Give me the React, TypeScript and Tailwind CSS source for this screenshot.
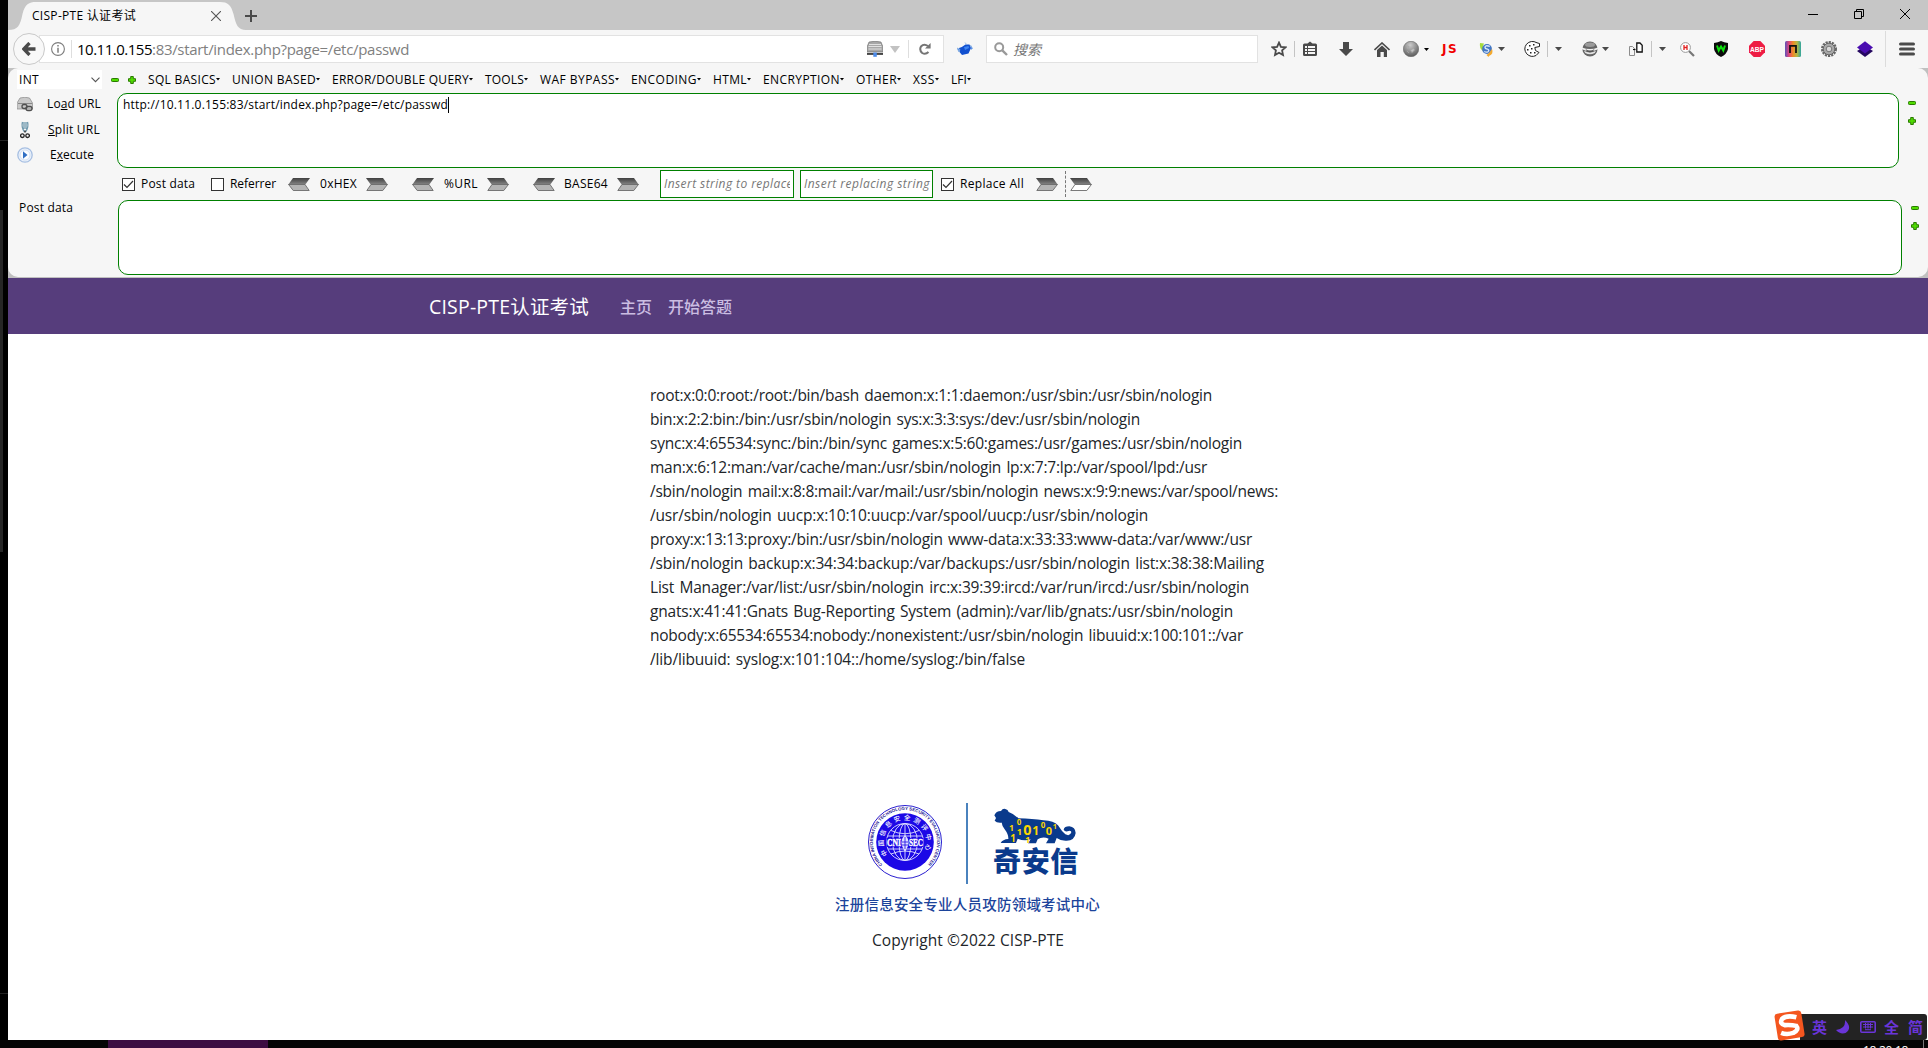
import { useLayoutEffect, useRef, useState } from "react";
import type { ReactNode } from "react";

/** Single line of text whose tracking is adjusted so that it fills its box. */
function Fit({ className = "", children }: { className?: string; children: ReactNode }) {
  const box = useRef<HTMLSpanElement>(null);
  const inner = useRef<HTMLSpanElement>(null);
  const [tracking, setTracking] = useState(0);
  useLayoutEffect(() => {
    if (!box.current || !inner.current) return;
    const count = (inner.current.textContent ?? "").length;
    const natural = inner.current.getBoundingClientRect().width - tracking * count;
    setTracking((box.current.getBoundingClientRect().width - natural) / count);
  }, []);
  return (
    <span ref={box} className={`inline-block shrink-0 whitespace-nowrap ${className}`}>
      <span ref={inner} style={{ letterSpacing: `${tracking}px` }}>
        {children}
      </span>
    </span>
  );
}

function Caret({ className = "" }: { className?: string }) {
  return (
    <svg className={`shrink-0 ${className}`} width="7" height="4" viewBox="0 0 7 4">
      <path d="M0 0h7L3.5 4z" fill="#4a4a4a" />
    </svg>
  );
}

function SmallCaret({ className = "" }: { className?: string }) {
  return (
    <svg className={`shrink-0 ${className}`} width="5" height="3" viewBox="0 0 5 3">
      <path d="M0 0h5L2.5 3z" fill="#000" />
    </svg>
  );
}

function Minus({ className = "" }: { className?: string }) {
  return (
    <svg className={`shrink-0 ${className}`} width="8" height="4" viewBox="0 0 8 4">
      <rect x=".5" y=".5" width="7" height="3" rx=".8" fill="#4fdc00" stroke="#2a7a00" />
    </svg>
  );
}

function Plus({ className = "" }: { className?: string }) {
  return (
    <svg className={`shrink-0 ${className}`} width="8" height="8" viewBox="0 0 8 8">
      <path d="M2.7.5h2.6v2.2h2.2v2.6H5.3v2.2H2.7V5.3H.5V2.7h2.2z" fill="#4fdc00" stroke="#2a7a00" strokeLinejoin="round" />
    </svg>
  );
}

function Arrow({ dir = "right", hollow = false, className = "" }: { dir?: "left" | "right"; hollow?: boolean; className?: string }) {
  return (
    <svg className={`shrink-0 ${className}`} width="22" height="13" viewBox="0 0 22 13">
      <defs>
        <linearGradient id="arrowTop" x1="0" x2="0" y1="0" y2="1">
          <stop offset="0" stopColor="#3f3f3f" />
          <stop offset="1" stopColor="#8a8a8a" />
        </linearGradient>
      </defs>
      <g transform={dir === "left" ? "translate(22 0) scale(-1 1)" : undefined}>
        <path d="M0 0h17L22 7H5z" fill="url(#arrowTop)" />
        <path d="M5 6.500h16.400L16.800 12.500H.8z" fill={hollow ? "#fff" : "#b4b4b4"} stroke="#6b6b6b" strokeWidth=".9" />
      </g>
    </svg>
  );
}

function Checkbox({ checked = false, className = "" }: { checked?: boolean; className?: string }) {
  return (
    <span className={`flex size-[13px] shrink-0 items-center justify-center border border-[#333] bg-white ${className}`}>
      {checked && (
        <svg width="11" height="11" viewBox="0 0 11 11">
          <path d="M1 5.500L4 8.500L10 2" fill="none" stroke="#333" strokeWidth="1.200" />
        </svg>
      )}
    </span>
  );
}

function TabStrip() {
  return (
    <div className="flex h-[30px] shrink-0 bg-[#c6c6c6]">
      <div className="relative flex h-full w-[226px] shrink-0 items-center">
        <svg className="absolute left-0 top-0" width="238" height="30" viewBox="0 0 238 30">
          <path d="M0 30C10 30 12 26 14.500 14C17 4 21 2 28 2H212C220 2 223 5 225.500 14C228 25 230 30 238 30Z" fill="#f6f6f6" />
        </svg>
        <Fit className="relative ml-6 mt-0.5 w-[104px] text-[12px] leading-4 text-black">CISP-PTE 认证考试</Fit>
        <svg className="relative ml-[75px] mt-0.5" width="10" height="10" viewBox="0 0 10 10">
          <path d="M0 0L10 10M10 0L0 10" stroke="#555" strokeWidth="1.100" />
        </svg>
      </div>
      <svg className="ml-[11px] mt-[10px]" width="12" height="12" viewBox="0 0 12 12">
        <path d="M6 0V12M0 6H12" stroke="#4a4a4a" strokeWidth="2" />
      </svg>
      <div className="ml-auto flex items-center pr-[18px]">
        <svg className="mb-[3px]" width="10" height="10" viewBox="0 0 10 10">
          <path d="M0 5.500H10" stroke="#000" />
        </svg>
        <svg className="mb-[2px] ml-9" width="10" height="10" viewBox="0 0 10 10">
          <path d="M.5 2.500h7v7h-7zM2.500 2.500V.5h7v7h-2" fill="none" stroke="#000" />
        </svg>
        <svg className="mb-[2px] ml-9" width="10" height="10" viewBox="0 0 10 10">
          <path d="M0 0L10 10M10 0L0 10" stroke="#000" />
        </svg>
      </div>
    </div>
  );
}

function Divider({ className = "" }: { className?: string }) {
  return <span className={`h-4 w-px shrink-0 bg-[#c4c4c4] ${className}`} />;
}

function ToolbarIcons() {
  return (
    <div className="flex flex-1 items-center">
      <svg className="ml-[13px] shrink-0" width="16" height="16" viewBox="0 0 16 16">
        <path d="M8 1.600l1.900 4.200 4.600.5-3.400 3.100.9 4.700L8 11.800l-4 2.300.9-4.700L1.500 6.300l4.600-.5z" fill="none" stroke="#4a4a4a" strokeWidth="1.800" />
      </svg>
      <Divider className="ml-[7px]" />
      <svg className="ml-2 shrink-0" width="14" height="16" viewBox="0 0 14 16">
        <path d="M1.500 2.500H4.500L7 .5L9.500 2.500H12.500Q14 2.500 14 4V13.500Q14 15 12.500 15H1.500Q0 15 0 13.500V4Q0 2.500 1.500 2.500Z" fill="#4a4a4a" />
        <path d="M2 5h2v2H2zM5 5h7v2H5zM2 8h2v2H2zM5 8h7v2H5zM2 11h2v2H2zM5 11h7v2H5z" fill="#f6f6f6" />
      </svg>
      <svg className="ml-[22px] shrink-0" width="14" height="14" viewBox="0 0 14 14">
        <path d="M4 0h6v7h4L7 14L0 7h4z" fill="#4a4a4a" />
      </svg>
      <svg className="ml-[21px] shrink-0" width="16" height="15" viewBox="0 0 16 15">
        <path d="M.5 8L8 1L15.500 8" fill="none" stroke="#4a4a4a" strokeWidth="1.600" />
        <path d="M3 8L8 3.500L13 8V15H9.800V10H6.500V15H3Z" fill="#4a4a4a" />
      </svg>
      <svg className="ml-[13px] shrink-0" width="16" height="16" viewBox="0 0 16 16">
        <defs>
          <radialGradient id="moonBall" cx=".45" cy=".25" r=".8">
            <stop offset="0" stopColor="#ccc" />
            <stop offset="1" stopColor="#555" />
          </radialGradient>
        </defs>
        <circle cx="8" cy="8" r="7.700" fill="url(#moonBall)" stroke="#666" strokeWidth=".6" />
        <path d="M4 5l2 .5-1.500 2zM7.500 9l3-1.500 1 1.500-2.500 2.500zM4 10l2 2" fill="#c4c4c4" stroke="#a5a5a5" strokeWidth=".8" />
      </svg>
      <SmallCaret className="ml-[5px]" />
      <Fit className="ml-[13px] w-4 font-['DejaVu_Sans'] text-[12px] font-bold leading-4 text-[#f00000]">JS</Fit>
      <svg className="ml-[21px] shrink-0" width="15" height="15" viewBox="0 0 15 15">
        <path d="M1 1l4 .5L4 4l2 2-2 3Q0 6 1 1Z" fill="#a6dc3c" />
        <circle cx="8" cy="7" r="4.900" fill="#4377c4" />
        <path d="M10.800 4.300Q6 2.800 6 5.300Q6 7 8.500 7.200Q10.800 8 9 9.700Q7.500 10.800 5.300 9.500" fill="none" stroke="#dce9fb" strokeWidth="1.300" />
        <path d="M13 7Q15 12 10 14L9.500 15L7.500 13L10 11Z" fill="#f3a92f" />
      </svg>
      <Caret className="ml-1" />
      <svg className="ml-[19px] shrink-0" width="17" height="16" viewBox="0 0 17 16">
        <path d="M13 1.800Q7-1.500 2.500 3.200Q-1 8 2.700 12.800Q7 17 12 14.500L15 11.500L11.500 9.500L10.800 6.500L15.500 5.500V2.500Z" fill="#fff" stroke="#222" strokeWidth="1" />
        <path d="M5 4h1.500v1.500H5zM9 3h1.500v1.500H9zM3 8h1.500v1.500H3zM7 7h1.500v1.500H7zM6 11h1.500v1.500H6zM10 11h1.500v1.500H10z" fill="#222" />
      </svg>
      <Divider className="ml-[6px]" />
      <Caret className="ml-[7px]" />
      <svg className="ml-5 shrink-0" width="16" height="16" viewBox="0 0 16 16">
        <circle cx="8" cy="8" r="7.600" fill="#666" />
        <path d="M0 6.500Q8 9.500 16 6.500V8.300Q8 12 0 8.300Z" fill="#f1f1f1" />
        <path d="M2 9.800Q8 13 14 9.800L12.800 12Q8 14.500 3.200 12Z" fill="#e2e2e2" />
        <path d="M3.500 8Q8 11 12.500 8L11 10.500Q8 12 5 10.500Z" fill="#555" />
        <ellipse cx="8" cy="3.800" rx="5" ry="2.200" fill="#9b9b9b" />
      </svg>
      <Caret className="ml-1" />
      <svg className="ml-5 shrink-0" width="14" height="14" viewBox="0 0 14 14">
        <path d="M.5 4.500h3l2 2v7h-5z" fill="#f6f6f6" stroke="#8c8c8c" />
        <path d="M7.800 1h3.200l2.200 2.200V10H7.800z" fill="#fff" stroke="#111" strokeWidth="1.300" />
        <path d="M4 7.500h2.500" stroke="#111" strokeWidth="1.200" />
      </svg>
      <Divider className="ml-2" />
      <Caret className="ml-[7px]" />
      <svg className="ml-[14px] shrink-0" width="15" height="15" viewBox="0 0 15 15">
        <path d="M9 9L14 14" stroke="#777" strokeWidth="2.200" />
        <circle cx="5.500" cy="5.500" r="4.900" fill="#fff" stroke="#999" />
        <path d="M4 3v5M7 3v5M4 5.500h3" stroke="#e02020" strokeWidth="1.300" />
      </svg>
      <svg className="ml-[19px] shrink-0" width="14" height="16" viewBox="0 0 14 16">
        <path d="M7 0Q10 1.500 14 2V8Q13 13 7 16Q1 13 0 8V2Q4 1.500 7 0Z" fill="#0b0b0b" />
        <path d="M3 4.500L4.700 9.500L7 5.500L9.300 9.500L11 4.500" fill="none" stroke="#0ee00e" strokeWidth="2" />
      </svg>
      <svg className="ml-[21px] shrink-0" width="16" height="16" viewBox="0 0 16 16">
        <path d="M4.700 0h6.600L16 4.700v6.600L11.300 16H4.700L0 11.300V4.700z" fill="#ee1c44" />
        <text x="8" y="11.200" textAnchor="middle" fontSize="8" fontWeight="700" textLength="14" lengthAdjust="spacingAndGlyphs" fill="#fff" fontFamily="Liberation Sans">
          ABP
        </text>
      </svg>
      <svg className="ml-5 shrink-0" width="16" height="16" viewBox="0 0 16 16">
        <defs>
          <linearGradient id="rainbow">
            <stop offset="0" stopColor="#5d52b8" />
            <stop offset=".25" stopColor="#e0457a" />
            <stop offset=".5" stopColor="#ef8a25" />
            <stop offset=".75" stopColor="#b5b944" />
            <stop offset="1" stopColor="#2ea5a0" />
          </linearGradient>
        </defs>
        <rect width="16" height="16" rx="1.500" fill="url(#rainbow)" />
        <path d="M5 12V4.800h6V12" fill="none" stroke="#111" strokeWidth="1.800" />
      </svg>
      <svg className="ml-5 shrink-0" width="16" height="16" viewBox="0 0 16 16">
        <circle cx="8" cy="8" r="6.900" fill="none" stroke="#666" strokeWidth="2.200" strokeDasharray="2.200 1" />
        <circle cx="8" cy="8" r="5.800" fill="#a9a9a9" stroke="#666" />
        <circle cx="8" cy="8" r="2.800" fill="#d9d9d9" stroke="#777" />
      </svg>
      <svg className="ml-5 shrink-0" width="16" height="16" viewBox="0 0 16 16">
        <path d="M0 10L8 5L16 10L8 16Z" fill="#24075f" />
        <path d="M0 6.500L8 .3L16 6.500L8 12.500Z" fill="#4a0db0" />
      </svg>
      <span className="ml-3 h-9 w-px shrink-0 bg-[#dcdcdc]" />
      <svg className="ml-[13px] shrink-0" width="16" height="14" viewBox="0 0 16 14">
        <path d="M1.500 2h13M1.500 7h13M1.500 12h13" stroke="#4a4a4a" strokeWidth="3" strokeLinecap="round" />
      </svg>
    </div>
  );
}

function NavBar() {
  return (
    <div className="flex h-[38px] shrink-0 items-center bg-[#f6f6f6]">
      <div className="relative z-10 ml-[5px] flex size-8 shrink-0 items-center justify-center rounded-full border border-[#c9c9c9] bg-[#f8f8f8]">
        <svg width="14" height="14" viewBox="0 0 14 14">
          <path d="M7.500 1L1.800 7L7.500 13M2.500 7H13.500" fill="none" stroke="#4a4a4a" strokeWidth="3.300" />
        </svg>
      </div>
      <div className="-ml-[6px] flex h-7 w-[905px] shrink-0 items-center border border-[#e2e2e2] bg-white">
        <svg className="ml-[11px] shrink-0" width="14" height="14" viewBox="0 0 14 14">
          <circle cx="7" cy="7" r="6.400" fill="none" stroke="#7d7d7d" strokeWidth="1.100" />
          <path d="M7 3v1.600M7 5.800v5" stroke="#7d7d7d" strokeWidth="1.500" />
        </svg>
        <span className="ml-[6px] h-[18px] w-px shrink-0 bg-[#dedede]" />
        <Fit className="ml-[5px] w-[75px] text-[15px] leading-5 text-black">10.11.0.155</Fit>
        <Fit className="w-[257px] text-[15px] leading-5 text-[#808080]">:83/start/index.php?page=/etc/passwd</Fit>
        <svg className="ml-auto shrink-0" width="16" height="16" viewBox="0 0 16 16">
          <path d="M2 1Q8-.5 14 1L16 6V10.500H0V6Z" fill="#a8a8a8" stroke="#666" strokeWidth=".6" />
          <path d="M2 3.500h12M1.500 5.500h13M1.500 8h13" stroke="#e8e8e8" strokeWidth=".9" />
          <path d="M0 12.800h16" stroke="#444" strokeWidth="2.200" />
          <path d="M6.300 11.500h3.500v4.300H6.300z" fill="#4d8be8" />
        </svg>
        <svg className="ml-[7px] shrink-0" width="10" height="7" viewBox="0 0 10 7">
          <path d="M0 0h10L5 7z" fill="#c2c2c2" />
        </svg>
        <span className="ml-2 h-[18px] w-px shrink-0 bg-[#dedede]" />
        <svg className="ml-[10px] mr-[12px] shrink-0" width="12" height="12" viewBox="0 0 12 12">
          <path d="M9.500 9Q6.500 12 3.200 10Q0 7 2 3.500Q5 .2 9 3" fill="none" stroke="#757575" strokeWidth="2" />
          <path d="M11.600 0V5.500H6Z" fill="#757575" />
        </svg>
      </div>
      <svg className="ml-[13px] shrink-0" width="16" height="14" viewBox="0 0 16 14">
        <path d="M2 6Q5.500 5 8.500 2.500L12.500 2.500L14 6L11.500 11.500L5 13L2.500 10Z" fill="#1150cf" />
        <path d="M0 6l3 1.500L2 10zM8 .5l2 2.500M13.500 3l2 3.500-1.500 1" fill="#4786ea" stroke="#86aee0" strokeWidth=".8" />
        <path d="M7 5l4.500-1 .5 2-4 2z" fill="#3e84f2" />
      </svg>
      <div className="ml-[13px] flex h-7 w-[272px] shrink-0 items-center border border-[#e2e2e2] bg-white">
        <svg className="ml-[7px] shrink-0" width="14" height="14" viewBox="0 0 14 14">
          <circle cx="5.200" cy="5.200" r="4" fill="none" stroke="#999" strokeWidth="2" />
          <path d="M8.300 8.300L13 13" stroke="#999" strokeWidth="2.400" />
        </svg>
        <Fit className="ml-[5px] mt-px w-7 text-[14px] italic leading-5 text-[#777]">搜索</Fit>
      </div>
      <ToolbarIcons />
    </div>
  );
}

const menus: { label: string; cls: string }[] = [
  { label: "SQL BASICS", cls: "w-[68px]" },
  { label: "UNION BASED", cls: "w-[84px]" },
  { label: "ERROR/DOUBLE QUERY", cls: "w-[137px]" },
  { label: "TOOLS", cls: "w-[39px]" },
  { label: "WAF BYPASS", cls: "w-[75px]" },
  { label: "ENCODING", cls: "w-[66px]" },
  { label: "HTML", cls: "w-[34px]" },
  { label: "ENCRYPTION", cls: "w-[77px]" },
  { label: "OTHER", cls: "w-[41px]" },
  { label: "XSS", cls: "w-[22px]" },
  { label: "LFI", cls: "w-[16px]" },
];

function MenuRow() {
  return (
    <div className="flex h-[25px] shrink-0 items-center pb-[2px] pl-[9px]">
      <div className="flex h-[19px] w-[85px] shrink-0 items-center bg-white">
        <Fit className="ml-0.5 w-5">INT</Fit>
        <svg className="ml-auto mr-[2px]" width="9" height="6" viewBox="0 0 9 6">
          <path d="M.5.700L4.500 4.700L8.500.700" fill="none" stroke="#555" strokeWidth="1.100" />
        </svg>
      </div>
      <Minus className="ml-[9px]" />
      <Plus className="ml-[9px]" />
      <div className="ml-3 flex items-center gap-3">
        {menus.map((m) => (
          <div key={m.label} className="flex items-center">
            <Fit className={m.cls}>{m.label}</Fit>
            <svg className="shrink-0" width="4" height="3" viewBox="0 0 4 3">
              <path d="M0 0h4L2 2.500z" fill="#000" />
            </svg>
          </div>
        ))}
      </div>
    </div>
  );
}

function ConvertRow() {
  return (
    <div className="flex h-8 shrink-0 items-center pl-[114px]">
      <Checkbox checked />
      <Fit className="ml-[6px] w-[54px]">Post data</Fit>
      <Checkbox className="ml-4" />
      <Fit className="ml-[6px] w-[46px]">Referrer</Fit>
      <Arrow dir="left" className="ml-3" />
      <Fit className="ml-[10px] w-[37px]">0xHEX</Fit>
      <Arrow className="ml-[9px]" />
      <Arrow dir="left" className="ml-6" />
      <Fit className="ml-[10px] w-[34px]">%URL</Fit>
      <Arrow className="ml-[9px]" />
      <Arrow dir="left" className="ml-6" />
      <Fit className="ml-[9px] w-[44px]">BASE64</Fit>
      <Arrow className="ml-[9px]" />
      <div className="ml-[21px] flex h-7 w-[134px] shrink-0 items-center overflow-hidden border border-[#008000] bg-white px-[3px]">
        <span className="w-full overflow-hidden whitespace-nowrap">
          <Fit className="w-[129px] italic text-[#777]">Insert string to replace</Fit>
        </span>
      </div>
      <div className="ml-[6px] flex h-7 w-[133px] shrink-0 items-center overflow-hidden border border-[#008000] bg-white px-[3px]">
        <Fit className="w-[126px] italic text-[#777]">Insert replacing string</Fit>
      </div>
      <Checkbox checked className="ml-2" />
      <Fit className="ml-[6px] w-[64px]">Replace All</Fit>
      <Arrow className="ml-3" />
      <span className="ml-[7px] h-[26px] shrink-0 border-l border-dashed border-[#777]" />
      <Arrow hollow className="ml-1" />
    </div>
  );
}

function HackBar() {
  return (
    <div className="h-[210px] shrink-0 bg-[#c0c0c0]">
      <div className="flex h-[209px] flex-col rounded-[10px] bg-[#f6f6f6] text-[12px] leading-4 text-black">
        <MenuRow />
        <div className="flex h-[75px] shrink-0">
          <div className="-mt-px flex w-[109px] shrink-0 flex-col pl-[9px]">
            <div className="flex h-[25px] items-center">
              <svg className="shrink-0" width="16" height="15" viewBox="0 0 16 15">
                <path d="M3 1Q8-.5 12.500 1L15.500 6V12H0V6Z" fill="#c9c9c9" stroke="#888" strokeWidth=".7" />
                <path d="M1 6.500H15" stroke="#888" />
                <rect x="5" y="7.500" width="5" height="4" rx="2" fill="none" stroke="#4e4e4e" strokeWidth="1.300" />
                <rect x="9" y="9.500" width="6" height="4" rx="2" fill="none" stroke="#4e4e4e" strokeWidth="1.300" />
              </svg>
              <Fit className="ml-[14px] w-[54px] -translate-y-px">
                Lo<u>a</u>d URL
              </Fit>
            </div>
            <div className="flex h-[26px] items-center">
              <svg className="ml-[3px] shrink-0" width="10" height="18" viewBox="0 0 10 18">
                <path d="M2.500 1Q1 6 4.500 11M7.500 1Q9 6 5.500 11M4 1v7M6 1v7" fill="none" stroke="#6d98ad" strokeWidth="1.300" />
                <path d="M5 9.500v2" stroke="#333" strokeWidth="1.500" />
                <circle cx="2.400" cy="14.700" r="1.800" fill="none" stroke="#222" strokeWidth="1.300" />
                <circle cx="7.600" cy="14.700" r="1.800" fill="none" stroke="#222" strokeWidth="1.300" />
              </svg>
              <Fit className="ml-[18px] w-[52px]">
                <u>S</u>plit URL
              </Fit>
            </div>
            <div className="flex h-[24px] items-center">
              <svg className="shrink-0" width="16" height="16" viewBox="0 0 16 16">
                <circle cx="8" cy="8" r="7.200" fill="#eaf1fb" stroke="#a7bfe2" strokeWidth="1.300" />
                <circle cx="8" cy="8" r="5" fill="#fbfdff" stroke="#d3e0f2" />
                <path d="M6 4.300L10.500 8L6 11.700Z" fill="#2f6fc4" />
              </svg>
              <Fit className="ml-[17px] w-[44px]">
                E<u>x</u>ecute
              </Fit>
            </div>
          </div>
          <div className="flex w-[1782px] shrink-0 items-start rounded-[10px] border border-[#008000] bg-white pl-[5px] pt-[3px]">
            <Fit className="w-[325px]">http://10.11.0.155:83/start/index.php?page=/etc/passwd</Fit>
            <span className="h-4 w-px bg-black" />
          </div>
          <div className="ml-[9px] flex flex-col pt-2">
            <Minus />
            <Plus className="mt-3" />
          </div>
        </div>
        <ConvertRow />
        <div className="flex h-[75px] shrink-0">
          <div className="w-[110px] shrink-0 pl-[11px]">
            <Fit className="w-[54px]">Post data</Fit>
          </div>
          <div className="w-[1784px] shrink-0 rounded-[10px] border border-[#008000] bg-white" />
          <div className="ml-[9px] flex flex-col pt-[6px]">
            <Minus />
            <Plus className="mt-3" />
          </div>
        </div>
      </div>
    </div>
  );
}

const passwd: { text: string; cls: string }[] = [
  { text: "root:x:0:0:root:/root:/bin/bash daemon:x:1:1:daemon:/usr/sbin:/usr/sbin/nologin", cls: "w-[562px]" },
  { text: "bin:x:2:2:bin:/bin:/usr/sbin/nologin sys:x:3:3:sys:/dev:/usr/sbin/nologin", cls: "w-[490px]" },
  { text: "sync:x:4:65534:sync:/bin:/bin/sync games:x:5:60:games:/usr/games:/usr/sbin/nologin", cls: "w-[592px]" },
  { text: "man:x:6:12:man:/var/cache/man:/usr/sbin/nologin lp:x:7:7:lp:/var/spool/lpd:/usr", cls: "w-[557px]" },
  { text: "/sbin/nologin mail:x:8:8:mail:/var/mail:/usr/sbin/nologin news:x:9:9:news:/var/spool/news:", cls: "w-[628px]" },
  { text: "/usr/sbin/nologin uucp:x:10:10:uucp:/var/spool/uucp:/usr/sbin/nologin", cls: "w-[498px]" },
  { text: "proxy:x:13:13:proxy:/bin:/usr/sbin/nologin www-data:x:33:33:www-data:/var/www:/usr", cls: "w-[602px]" },
  { text: "/sbin/nologin backup:x:34:34:backup:/var/backups:/usr/sbin/nologin list:x:38:38:Mailing", cls: "w-[614px]" },
  { text: "List Manager:/var/list:/usr/sbin/nologin irc:x:39:39:ircd:/var/run/ircd:/usr/sbin/nologin", cls: "w-[599px]" },
  { text: "gnats:x:41:41:Gnats Bug-Reporting System (admin):/var/lib/gnats:/usr/sbin/nologin", cls: "w-[583px]" },
  { text: "nobody:x:65534:65534:nobody:/nonexistent:/usr/sbin/nologin libuuid:x:100:101::/var", cls: "w-[593px]" },
  { text: "/lib/libuuid: syslog:x:101:104::/home/syslog:/bin/false", cls: "w-[375px]" },
];

function Seal() {
  return (
    <svg width="76" height="76" viewBox="-38 -38 76 76">
      <defs>
        <path id="sealOuter" d="M-22.600 22.600A32 32 0 1 1 22.600 22.600" />
        <path id="sealInner" d="M-17 12.500A21.500 21.500 0 1 1 17 12.500" />
      </defs>
      <circle r="36.500" fill="#fff" stroke="#2a1fd0" strokeWidth="1" />
      <circle r="28.800" fill="#1c08e6" />
      <text fontSize="4.400" fontWeight="700" fill="#1c1390" fontFamily="Liberation Sans">
        <textPath href="#sealOuter" textLength="150" lengthAdjust="spacingAndGlyphs">CHINA INFORMATION TECHNOLOGY SECURITY EVALUATION CENTER</textPath>
      </text>
      <text fontSize="6.500" fontWeight="500" fill="#fff" fontFamily="Noto Sans CJK SC">
        <textPath href="#sealInner" textLength="90">中国信息安全测评中心</textPath>
      </text>
      <g fill="none" stroke="#dfe0ff" strokeWidth=".9">
        <circle r="18.500" />
        <ellipse rx="6" ry="18.500" />
        <ellipse rx="12.500" ry="18.500" />
        <path d="M-14-11.500Q0-5 14-11.500M-17-6H17M-17 7H17M-14 12Q0 6 14 12M0-18.500V18.500" />
      </g>
      <rect x="-18.500" y="-4" width="37" height="9" fill="#1c08e6" />
      <text x="-18" y="4.400" fontSize="9.500" fontWeight="700" textLength="14" lengthAdjust="spacingAndGlyphs" fill="#fff" stroke="#fff" strokeWidth=".4" fontFamily="Liberation Serif">CNI</text>
      <text x="4" y="4.400" fontSize="9.500" fontWeight="700" textLength="14" lengthAdjust="spacingAndGlyphs" fill="#fff" stroke="#fff" strokeWidth=".4" fontFamily="Liberation Serif">SEC</text>
      <path d="M0-7Q5-2 3 4L0 10L-3 4Q-5-2 0-7Z" fill="#dfe0ff" />
      <path d="M-3 0H3M-3 3H3M0-5V7" stroke="#1c08e6" strokeWidth=".8" />
    </svg>
  );
}

function Tiger() {
  return (
    <svg width="84" height="36" viewBox="521 58 252 108">
      <path
        d="M525 80Q530 67 545 67Q550 59 558 61Q566 63 568 70Q585 76 597 89Q640 90 672 95Q704 97 716 110Q727 128 738 137Q752 144 756 131Q756 125 748 127Q737 131 733 123Q735 113 750 113Q768 115 769 133Q766 156 742 156Q724 157 712 148L706 164H680L688 150Q670 142 655 152L650 164H626L634 152Q615 158 595 150L590 163H544Q550 152 567 151Q568 138 556 122Q546 108 548 102Q532 104 526 96L530 88Z"
        fill="#0a3a8c"
      />
      <g fill="#fbd500" fontFamily="Noto Sans" fontWeight="700">
        <text x="569" y="128" fontSize="26">1</text>
        <text x="592" y="110" fontSize="24">0</text>
        <text x="592" y="140" fontSize="28">1</text>
        <text x="573" y="160" fontSize="29">1</text>
        <text x="612" y="139" fontSize="43">0</text>
        <text x="617" y="163" fontSize="28">1</text>
        <text x="639" y="140" fontSize="36">1</text>
        <text x="664" y="118" fontSize="24">0</text>
        <text x="679" y="140" fontSize="33">0</text>
        <text x="700" y="121" fontSize="22">1</text>
      </g>
    </svg>
  );
}

function Page() {
  return (
    <div className="flex flex-1 flex-col bg-white text-[#212529]">
      <nav className="flex h-14 shrink-0 items-center bg-[#563d7c] pl-[421px] pt-px">
        <Fit className="w-[160px] text-[19.500px] leading-7 text-white">CISP-PTE认证考试</Fit>
        <Fit className="ml-[31px] w-8 text-[16px] font-medium leading-6 text-[#cbbde2]">主页</Fit>
        <Fit className="ml-4 w-16 text-[16px] font-medium leading-6 text-[#cbbde2]">开始答题</Fit>
      </nav>
      <main className="flex flex-col pl-[642px] pt-[49px] text-[15.500px] leading-6 [word-spacing:1.500px]">
        {passwd.map((line) => (
          <Fit key={line.text} className={line.cls}>
            {line.text}
          </Fit>
        ))}
      </main>
      <footer className="mt-[132px] flex w-[1920px] flex-col pl-[827px]">
        <div className="flex h-[82px]">
          <div className="ml-8 mt-[1px]">
            <Seal />
          </div>
          <div className="ml-[23px] h-[81px] w-[2px] bg-[#4a82bd]" />
          <div className="ml-[25px] flex w-[86px] flex-col pt-[5px]">
            <Tiger />
            <Fit className="mt-px w-[86px] text-[28px] font-black leading-8 text-[#0a3a8c]">奇安信</Fit>
          </div>
        </div>
        <Fit className="mt-[10px] w-[265px] text-[14.500px] font-medium leading-5 text-[#1c449b]">注册信息安全专业人员攻防领域考试中心</Fit>
        <Fit className="ml-[37px] mt-[13px] w-[192px] text-[15.500px] leading-6">Copyright ©2022 CISP-PTE</Fit>
      </footer>
    </div>
  );
}

function InputMethodBar() {
  return (
    <div className="absolute bottom-2 right-px flex h-[26px] w-[127px] items-center rounded-r-[3px] bg-[#232323] pl-3 text-[15px] font-bold leading-5 text-[#6a35d8]">
      <svg className="absolute -left-[27px] -top-[4px]" width="33" height="31" viewBox="0 0 33 31">
        <g transform="rotate(-9 16 15)">
          <rect x="3" y="2" width="27" height="27" rx="3" fill="#f4561f" />
          <path d="M24.500 8.500Q15 4.500 10 8Q6.500 12.500 12 14.500Q19 15.300 23 17Q25.500 21.500 19 23.500Q12 24.500 7 21.500" fill="none" stroke="#fff" strokeWidth="4.600" />
        </g>
      </svg>
      <span className="w-[15px] shrink-0">英</span>
      <svg className="ml-[9px] shrink-0" width="14" height="14" viewBox="0 0 14 14">
        <path d="M9 0Q10 9 0 10Q4 14.500 9.500 13Q17 8 9 0Z" fill="#6a35d8" />
      </svg>
      <svg className="ml-[10px] shrink-0" width="16" height="12" viewBox="0 0 16 12">
        <rect x=".8" y=".8" width="14.400" height="10.400" rx="1" fill="none" stroke="#6a35d8" strokeWidth="1.600" />
        <path d="M3 3.500h10M3 6h10M5 8.700h6M5.500 2v5.500M8 2v5.500M10.500 2v5.500" stroke="#6a35d8" />
      </svg>
      <span className="ml-2 w-[15px] shrink-0">全</span>
      <span className="ml-[9px] w-[15px] shrink-0">简</span>
    </div>
  );
}

export default function App() {
  return (
    <div className="relative flex h-[1048px] w-[1928px] flex-col overflow-hidden bg-black font-['Open_Sans','Noto_Sans_CJK_SC',sans-serif]">
      <div className="flex h-[1040px] shrink-0">
        <div className="flex w-2 shrink-0 flex-col bg-black">
          <div className="h-[141px] border-b border-[#222]" />
          <div className="mt-[69px] h-[342px] w-[3px] bg-[#262626]" />
          <div className="h-[442px] border-b border-[#222]" />
        </div>
        <div className="flex w-[1920px] shrink-0 flex-col">
          <TabStrip />
          <NavBar />
          <HackBar />
          <Page />
        </div>
      </div>
      <div className="flex h-2 shrink-0 overflow-hidden bg-[#050505]">
        <div className="ml-[108px] w-40 bg-[#3d0d42]" />
        <span className="ml-auto mr-3 mt-[3px] w-12 text-[12px] leading-4 tracking-tight text-white">18:20:18</span>
        <span className="mr-1 h-full w-px bg-[#777]" />
      </div>
      <InputMethodBar />
    </div>
  );
}
